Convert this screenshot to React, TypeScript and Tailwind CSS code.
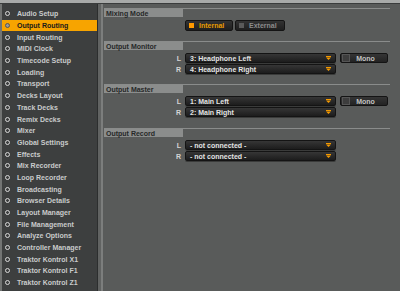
import React from "react";

const items = [
  "Audio Setup",
  "Output Routing",
  "Input Routing",
  "MIDI Clock",
  "Timecode Setup",
  "Loading",
  "Transport",
  "Decks Layout",
  "Track Decks",
  "Remix Decks",
  "Mixer",
  "Global Settings",
  "Effects",
  "Mix Recorder",
  "Loop Recorder",
  "Broadcasting",
  "Browser Details",
  "Layout Manager",
  "File Management",
  "Analyze Options",
  "Controller Manager",
  "Traktor Kontrol X1",
  "Traktor Kontrol F1",
  "Traktor Kontrol Z1",
];

const font = { fontFamily: '"Liberation Sans", Arial, sans-serif' };

function Arrow() {
  return (
    <svg width="5" height="4" viewBox="0 0 5 4" className="shrink-0">
      <rect x="0" y="0" width="5" height="1" fill="#f59a00" />
      <polygon points="0,1.5 5,1.5 2.5,4" fill="#f59a00" />
    </svg>
  );
}

function Header({ title }: { title: string }) {
  return (
    <div className="flex border-t border-[#8a8c8b]">
      <div className="w-[79px] h-[8px] bg-[#8b8d8c] flex items-center pl-[2px] text-[7px] font-bold text-[#262828] leading-none">
        {title}
      </div>
    </div>
  );
}

function Dropdown({ label, value, mono, mt }: { label: string; value: string; mono?: boolean; mt: string }) {
  return (
    <div className={`flex items-center h-[10px] ${mt}`}>
      <div className="w-[77px] text-right text-[7px] font-bold text-[#d4d4d4] leading-none">{label}</div>
      <div className="ml-[4px] w-[151px] h-[10px] rounded-[2px] bg-gradient-to-b from-[#363636] to-[#1d1d1d] border border-[#141414] flex items-center pl-[4px] pr-[4px] shadow-[0_1px_0_rgba(0,0,0,0.35)]">
        <span className="flex-1 text-[7px] font-bold text-[#e4e4e4] leading-none whitespace-nowrap">{value}</span>
        <Arrow />
      </div>
      {mono && (
        <div className="ml-[4px] w-[48px] h-[10px] rounded-[2px] bg-gradient-to-b from-[#353535] to-[#232323] border border-[#141414] flex items-center">
          <div className="w-[8px] h-[8px] ml-px bg-[#3d3d3d] border border-[#555]" />
          <span className="flex-1 text-center text-[7px] font-bold text-[#c4c4c4] leading-none pr-[6px]">Mono</span>
        </div>
      )}
    </div>
  );
}

export default function App() {
  return (
    <div className="w-[400px] h-[291px] overflow-hidden bg-[#595b5a] flex flex-col" style={font}>
      <div className="h-[3px] bg-[#a8aaa9] shrink-0" />
      <div className="h-[1px] bg-[#3a3c3c] shrink-0" />
      <div className="flex flex-1 min-h-0">
        <div className="w-[2px] bg-[#727473]" />
        <div className="w-[95px] bg-[#3d3f3f] pt-[4px] flex flex-col">
          {items.map((it, i) => {
            const sel = i === 1;
            return (
              <div
                key={it}
                className={`h-[11.7px] shrink-0 flex items-center pl-[3px] ${sel ? "bg-[#f7a400]" : ""}`}
              >
                <span
                  className={`w-[5px] h-[5px] rounded-full border shrink-0 ${sel ? "border-[#555] bg-[#9a9a9a]" : "border-[#d8d8d8]"}`}
                />
                <span
                  className={`ml-[7px] text-[7px] font-bold leading-none whitespace-nowrap ${sel ? "text-[#1a1a1a]" : "text-[#c9cbcb]"}`}
                >
                  {it}
                </span>
              </div>
            );
          })}
        </div>
        <div className="w-[1px] bg-[#2c2e2e]" />
        <div className="w-[3px] bg-[#616362]" />
        <div className="w-[2px] bg-[#7c7e7d]" />
        <div className="flex-1 bg-[#595b5a] pl-[1px] pr-[10px] pt-[4px] flex flex-col">
          <Header title="Mixing Mode" />
          <div className="flex items-center mt-[3px] h-[11px]">
            <div className="w-[81px]" />
            <div className="w-[48px] h-[11px] rounded-[2px] bg-gradient-to-b from-[#333] to-[#1f1f1f] border border-[#141414] flex items-center pl-[3px]">
              <span className="w-[5px] h-[5px] bg-[#ff9a00] shrink-0" />
              <span className="ml-[5px] text-[7px] font-bold text-[#e89c00] leading-none">Internal</span>
            </div>
            <div className="ml-[2px] w-[50px] h-[11px] rounded-[2px] bg-gradient-to-b from-[#333] to-[#1f1f1f] border border-[#141414] flex items-center pl-[3px]">
              <span className="w-[5px] h-[5px] bg-[#5a5a5a] shrink-0" />
              <span className="ml-[5px] text-[7px] font-bold text-[#8c8c8c] leading-none">External</span>
            </div>
          </div>

          <div className="mt-[10px]">
            <Header title="Output Monitor" />
          </div>
          <Dropdown label="L" value="3: Headphone Left" mono mt="mt-[3px]" />
          <Dropdown label="R" value="4: Headphone Right" mt="mt-[1px]" />

          <div className="mt-[10px]">
            <Header title="Output Master" />
          </div>
          <Dropdown label="L" value="1: Main Left" mono mt="mt-[3px]" />
          <Dropdown label="R" value="2: Main Right" mt="mt-[1px]" />

          <div className="mt-[11px]">
            <Header title="Output Record" />
          </div>
          <Dropdown label="L" value="- not connected -" mt="mt-[3px]" />
          <Dropdown label="R" value="- not connected -" mt="mt-[1px]" />
        </div>
      </div>
    </div>
  );
}
